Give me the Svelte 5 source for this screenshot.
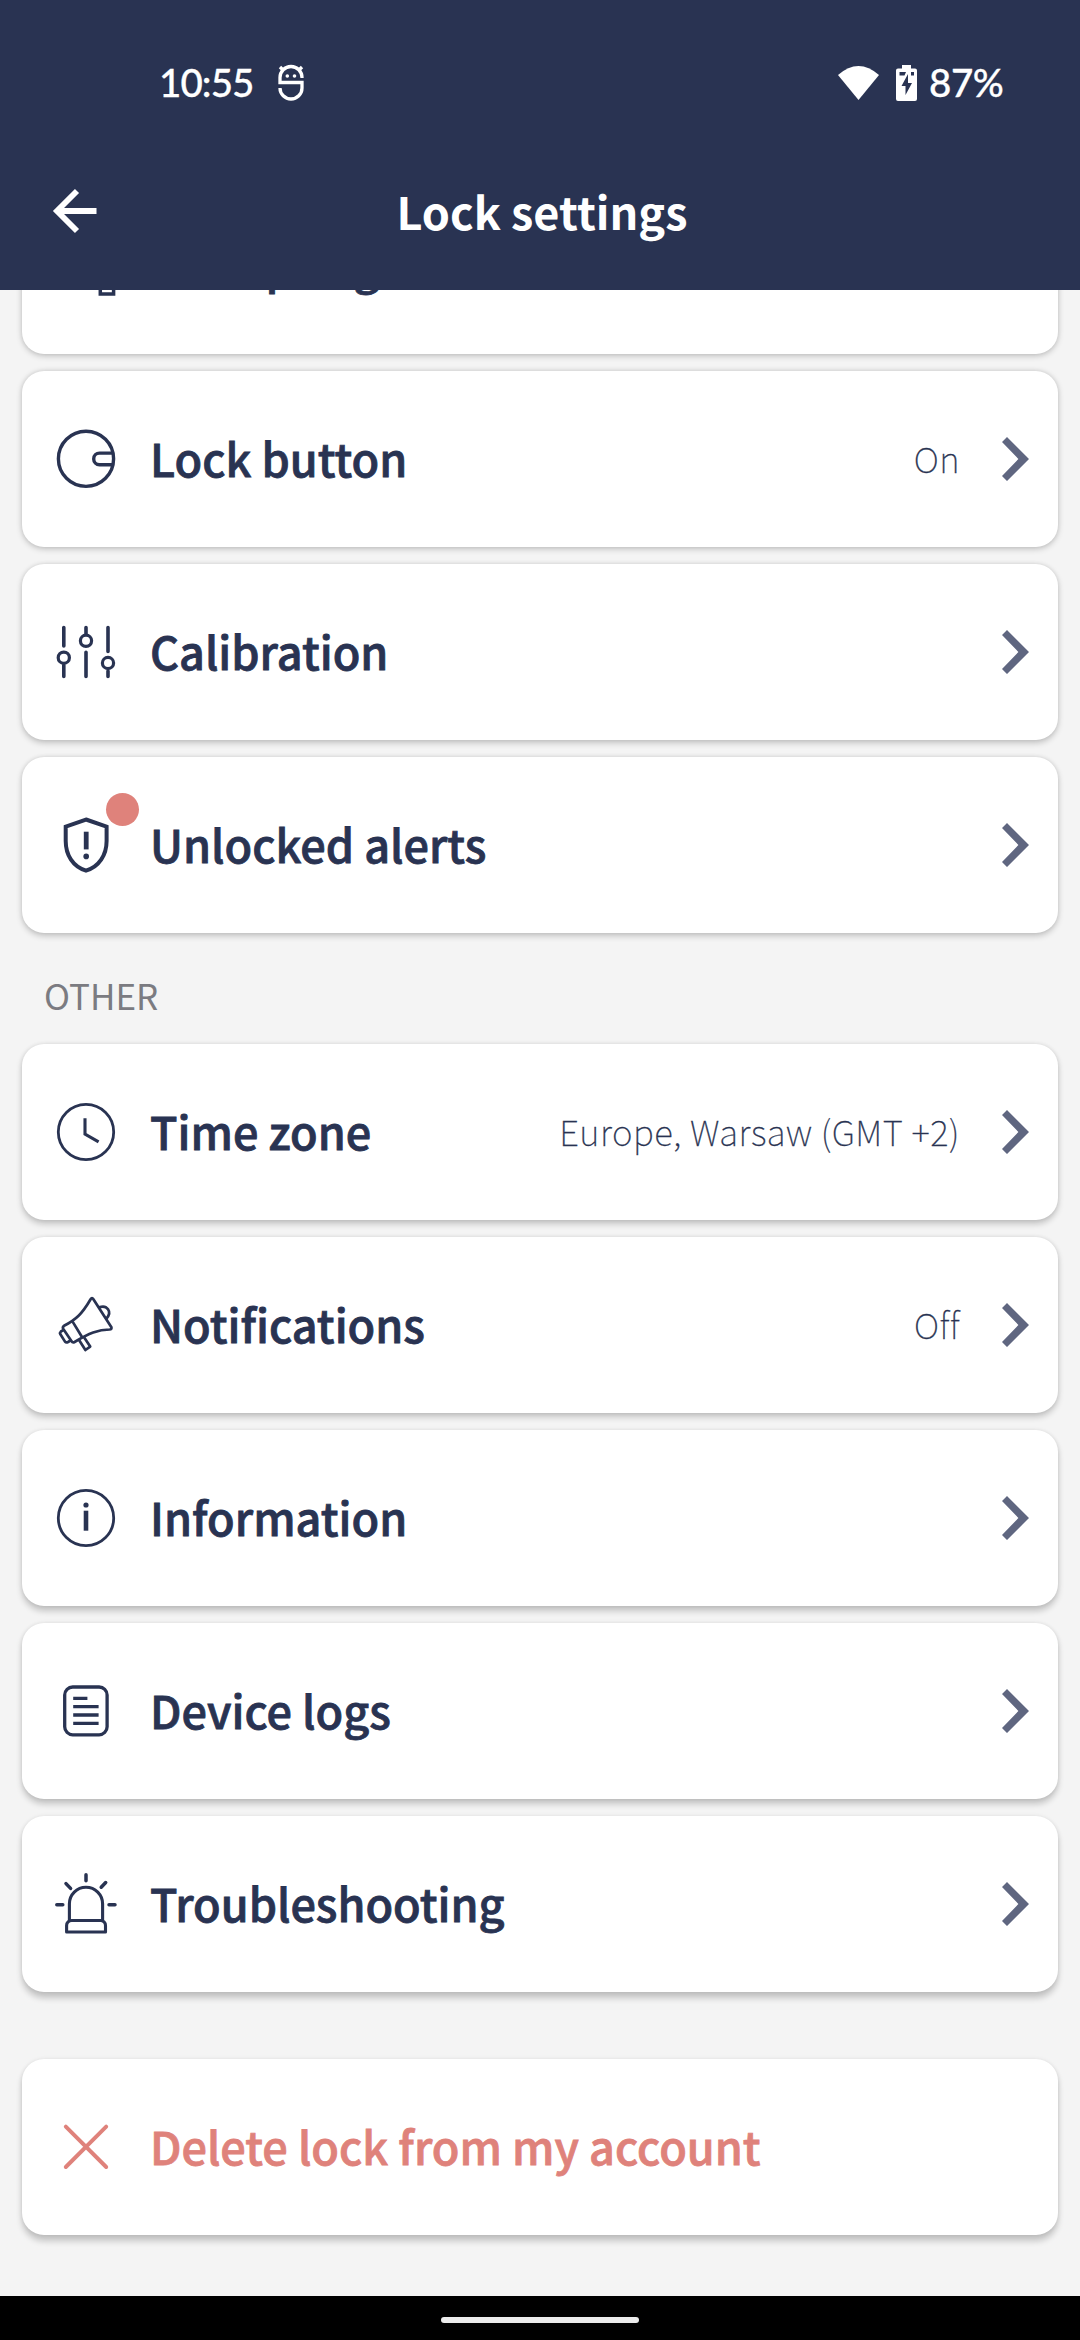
<script>
  const first = [
    { icon: 'spring', label: 'Pull spring' },
    { icon: 'knob', label: 'Lock button', value: 'On' },
    { icon: 'sliders', label: 'Calibration' },
    { icon: 'shield', label: 'Unlocked alerts', badge: true }
  ];
  const other = [
    { icon: 'clock', label: 'Time zone', value: 'Europe, Warsaw (GMT +2)' },
    { icon: 'horn', label: 'Notifications', value: 'Off' },
    { icon: 'info', label: 'Information' },
    { icon: 'logs', label: 'Device logs' },
    { icon: 'siren', label: 'Troubleshooting' }
  ];
  // Shadows grow deeper the further a card sits from the top of the screen.
  const depth = (n) => (1.5 + n * 0.4).toFixed(1) + 'px';
</script>

{#snippet row(item, n)}
  <div class="card" class:danger={item.danger} style="--drop: {depth(n)}">
    <svg class="icon" viewBox="0 0 60 60">
      {#if item.icon === 'spring'}
        <path stroke-width="3.5" d="M44.3 40V58H57.6V40" />
      {:else if item.icon === 'knob'}
        <circle cx="30" cy="29.8" r="27.6" stroke-width="3.4" />
        <path stroke-width="3.4" d="M57 24.1H43.5a5.7 5.7 0 0 0 0 11.6H57" />
      {:else if item.icon === 'sliders'}
        <g stroke-width="3.6" stroke-linecap="round">
          <path d="M7.8 5.5V24M7.8 43V54.5M30 5.5V12M30 30.3V54.5M52 5.5V29.5M52 49V54.5" />
          <circle cx="7.8" cy="35.7" r="5.6" stroke-width="3.2" />
          <circle cx="30" cy="18.8" r="5.6" stroke-width="3.2" />
          <circle cx="52" cy="41" r="5.6" stroke-width="3.2" />
        </g>
      {:else if item.icon === 'shield'}
        <path stroke-width="4" d="M30 4.5L50.6 11.7V26C50.6 40 43 51.8 30 55.6C17 51.8 9.7 40 9.7 26V11.7Z" />
        <path stroke-width="4.8" d="M30.2 16.7V34.4" />
        <circle class="dot" cx="30.2" cy="41.4" r="2.8" />
      {:else if item.icon === 'clock'}
        <circle cx="30" cy="30" r="27.7" stroke-width="2.8" />
        <path stroke-width="3.1" d="M29 16.2V32L42.6 39.8" />
      {:else if item.icon === 'horn'}
        <g stroke-width="2.7" stroke-linejoin="round">
          <path d="M34.6 4.2Q36 2 37.4 4.2L55.4 32.2Q56 34.4 53.6 34.5C42 34.6 33 38.5 18.6 47Q16.6 48 15.4 46L7.3 34Q6.2 32 8 30.8C20 24.5 26 19 34.6 4.2Z" />
          <path d="M16.6 26.6L26 42M8 34.6L4.9 36.5Q3.6 37.7 4.4 39.3L9 46.6Q10.2 48 12 47L15.3 45M23.2 45.2L29.4 55L34.2 51.6L28.2 42.4M43.2 12.3C51 9.3 56.5 17 50.5 23.5" />
        </g>
      {:else if item.icon === 'info'}
        <circle cx="30" cy="30" r="27.7" stroke-width="2.8" />
        <circle class="dot" cx="30" cy="17" r="2.6" />
        <path stroke-width="4.6" d="M30 22.7V42.7" />
      {:else if item.icon === 'logs'}
        <rect x="8.7" y="6" width="42.4" height="47.8" rx="8" stroke-width="3.3" />
        <path stroke-width="3.3" d="M17.2 17.4H31.4M17.2 25.7H42.6M17.2 34H42.6M17.2 42.4H42.6" />
      {:else if item.icon === 'siren'}
        <g stroke-width="3.1" stroke-linejoin="round">
          <path d="M13.4 46.5V29.8a16.6 16.6 0 0 1 33.2 0V46.5" />
          <path d="M10.6 58V51.5a5 5 0 0 1 5-5H44.5a5 5 0 0 1 5 5V58Z" />
          <path stroke-width="3.5" stroke-linecap="round" d="M30 .8V6.8M.8 30.7H6.8M53 30.7H59M10 9.6L14.6 14.4M49.7 8.5L45.2 13.2" />
        </g>
      {:else}
        <path stroke-width="3.9" stroke-linecap="round" d="M9.8 9.6L50.2 50M50.2 9.6L9.8 50" />
      {/if}
    </svg>
    {#if item.badge}<span class="badge"></span>{/if}
    <span class="label">{item.label}</span>
    {#if item.value}<span class="value">{item.value}</span>{/if}
    {#if !item.danger}
      <svg class="chevron" viewBox="0 0 27 44"><path d="M0 5L5 0L27 22L5 44L0 39L16.4 22Z" /></svg>
    {/if}
  </div>
{/snippet}

<div class="screen">
  <header>
    <div class="status">
      <span class="time">10:55</span>
      <svg class="mask" viewBox="0 0 26 36">
        <path d="M2 12.5a11 11 0 0 1 22 0V13M2 12V17.5H24V23a11 11 0 0 1-22 0" />
        <path d="M2 2L5.5 5.5M24 2L20.5 5.5" />
        <circle cx="9.3" cy="11" r="1.8" /><circle cx="16.5" cy="11" r="1.8" />
      </svg>
      <svg class="wifi" viewBox="0 0 41 34"><path d="M0 9Q20.5-9 41 9L20.5 34Z" /></svg>
      <svg class="battery" viewBox="0 0 21 36">
        <path fill-rule="evenodd" d="M6 0H15V3.5H19Q21 3.5 21 5.5V34Q21 36 19 36H2Q0 36 0 34V5.5Q0 3.5 2 3.5H6ZM3.5 7V10.5H8.5L10 7ZM15 7V10.5H18V7ZM12 9L5.5 21H9.5V30L16 18H12Z" />
      </svg>
      <span class="percent">87%</span>
    </div>
    <div class="bar">
      <svg class="back" viewBox="0 0 44 44"><path d="M43.5 22H4M24 2L4 22L24 42" /></svg>
      <h1>Lock settings</h1>
    </div>
  </header>
  <main>
    <section class="list scrolled">
      {#each first as item, i}{@render row(item, i)}{/each}
    </section>
    <h2>OTHER</h2>
    <section class="list">
      {#each other as item, i}{@render row(item, i + 5)}{/each}
    </section>
    <section class="list remove">
      {@render row({ icon: 'cross', label: 'Delete lock from my account', danger: true }, 10)}
    </section>
  </main>
  <footer><span class="home"></span></footer>
</div>

<style>
  :global(body) { margin: 0; }
  .screen {
    width: 1080px;
    height: 2340px;
    display: flex;
    flex-direction: column;
    overflow: hidden;
    background: #f4f4f4;
    color: #293352;
    font-family: "Source Sans Pro", "Noto Sans CJK JP", "Noto Sans", sans-serif;
  }
  svg { display: block; flex: none; overflow: visible; }
  header {
    flex: none;
    height: 290px;
    display: flex;
    flex-direction: column;
    background: #293352;
    color: #fff;
    position: relative;
    z-index: 1;
  }
  .status {
    box-sizing: border-box;
    height: 133px;
    padding: 33px 78px 0 159px;
    display: flex;
    align-items: center;
    font-family: Lato, sans-serif;
    font-size: 38.5px;
    font-weight: 500;
    -webkit-text-stroke: .3px #fff;
  }
  .time { width: 119px; padding-bottom: 2px; letter-spacing: -.9px; }
  .mask { width: 26px; height: 36px; fill: none; stroke: #fff; stroke-width: 3.3; }
  .mask circle { fill: #fff; stroke: none; }
  .wifi { width: 41px; height: 34px; margin-left: auto; fill: #fff; }
  .battery { width: 21px; height: 36px; margin: 0 12px 0 17px; fill: #fff; }
  .percent { width: 73px; padding-bottom: 2px; letter-spacing: -.4px; }
  .bar {
    flex: 1;
    display: grid;
    grid-template-columns: 100px 1fr 100px;
    align-items: start;
    padding-top: 56px;
  }
  .back { width: 44px; height: 44px; margin-left: 53px; fill: none; stroke: #fff; stroke-width: 5.8; }
  h1 {
    margin: -8px 0 0 4px;
    text-align: center;
    font-size: 45px;
    line-height: 60px;
    font-weight: 700;
  }
  main { flex: 1; min-height: 0; }
  .list { display: flex; flex-direction: column; gap: 17px; padding: 0 22px; }
  .scrolled { margin-top: -112px; }
  .remove { margin-top: 67px; }
  .card {
    box-sizing: border-box;
    height: 176px;
    display: flex;
    align-items: center;
    padding: 0 29px 0 34px;
    border-radius: 22px;
    background: #fff;
    position: relative;
    box-shadow: 0 var(--drop) 6px rgba(0, 0, 0, .2), 0 0 4px rgba(0, 0, 0, .08);
  }
  .icon { width: 60px; height: 60px; fill: none; stroke: currentColor; }
  .dot { fill: currentColor; stroke: none; }
  .label {
    margin-left: 34px;
    padding-bottom: 3px;
    font-size: 45px;
    line-height: 60px;
    font-weight: 500;
    -webkit-text-stroke: .8px currentColor;
    white-space: nowrap;
  }
  .value {
    margin-left: auto;
    padding-bottom: 3px;
    font-size: 35px;
    font-weight: 100;
    letter-spacing: .5px;
    -webkit-text-stroke: .3px currentColor;
    white-space: nowrap;
  }
  .chevron { width: 27px; height: 44px; margin-left: auto; fill: #5f6680; }
  .value + .chevron { margin-left: 42px; }
  .danger { color: #df827b; }
  .badge {
    position: absolute;
    left: 84px;
    top: 36px;
    width: 33px;
    height: 33px;
    border-radius: 50%;
    background: #df827b;
  }
  h2 {
    margin: 0;
    height: 111px;
    padding: 0 44px;
    font-size: 35px;
    line-height: 124px;
    font-weight: 400;
    color: #7b7b81;
  }
  footer {
    flex: none;
    height: 44px;
    display: flex;
    justify-content: center;
    align-items: center;
    background: #000;
    position: relative;
  }
  .home { width: 198px; height: 6px; margin-top: 4px; border-radius: 3px; background: #ececec; }
</style>
